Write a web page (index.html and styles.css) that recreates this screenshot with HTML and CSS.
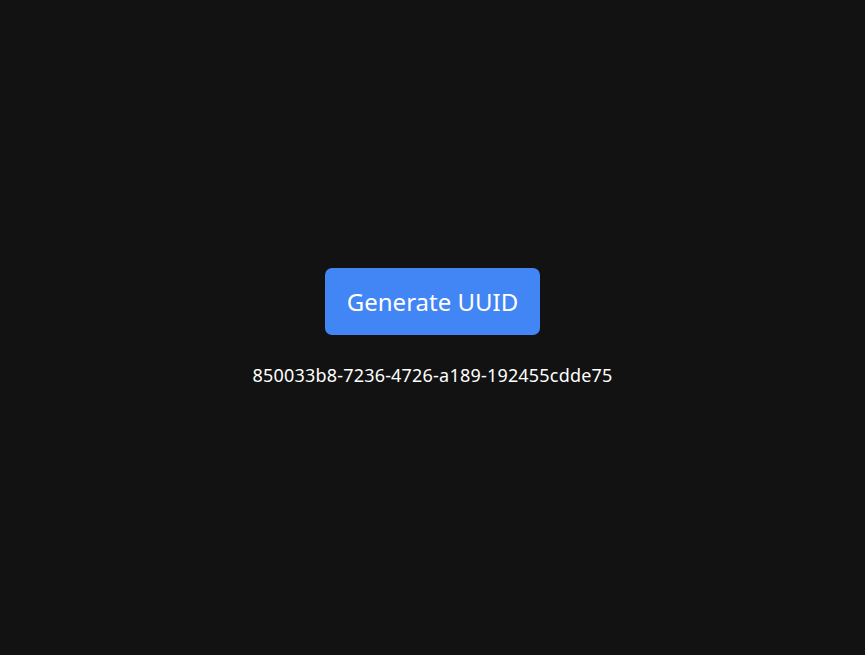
FILE: index.html
```html
<!DOCTYPE html>
<html lang="en">
<head>
<meta charset="utf-8">
<title>UUID Generator</title>
<link rel="stylesheet" href="styles.css">
</head>
<body>
<main class="app">
  <button class="gen-btn" type="button">Generate UUID</button>
  <p class="uuid">850033b8-7236-4726-a189-192455cdde75</p>
</main>
</body>
</html>
```
FILE: styles.css
```css
html, body {
  margin: 0;
  padding: 0;
  height: 100%;
  background: #121212;
}
body {
  font-family: "Noto Sans", "Open Sans", sans-serif;
  color: #ffffff;
}
.app {
  height: 100%;
  display: flex;
  flex-direction: column;
  align-items: center;
  justify-content: center;
}
.gen-btn {
  font-family: "Noto Sans", "Open Sans", sans-serif;
  font-size: 24px;
  line-height: 33px;
  color: #ffffff;
  background: #4285f4;
  border: none;
  border-radius: 7px;
  padding: 17px 22px;
  cursor: pointer;
}
.uuid {
  margin: 28px 0 0;
  font-size: 18px;
  line-height: 24px;
  letter-spacing: 0.2px;
}
```
